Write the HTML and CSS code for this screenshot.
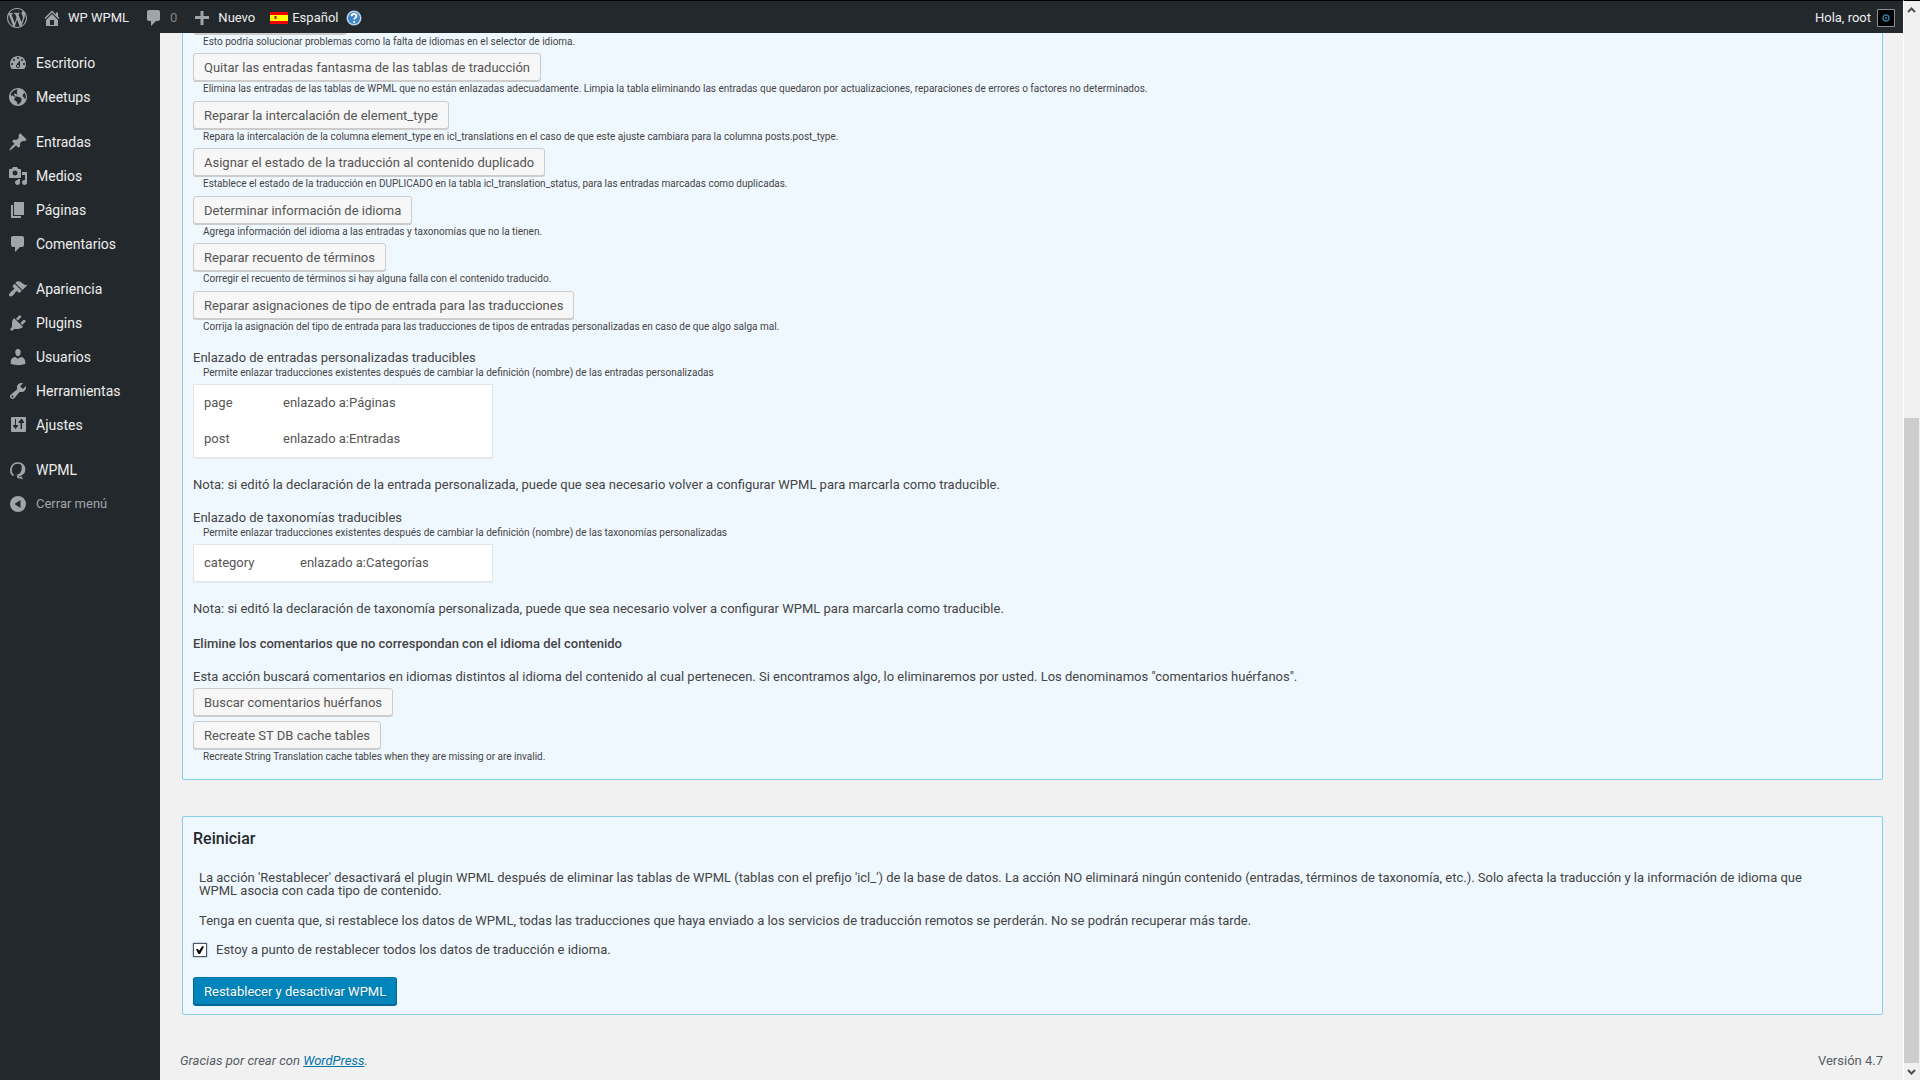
FILE: index.html
```html
<!DOCTYPE html>
<html lang="es">
<head>
<meta charset="utf-8">
<title>WP WPML</title>
<link rel="stylesheet" href="styles.css">
</head>
<body>
<div class="app">
<header class="bar">
  <a class="bar-item logo" href="#" aria-label="WordPress"><svg class="icon" viewBox="0 0 20 20"><path d="M20 10c0-5.51-4.49-10-10-10C4.48 0 0 4.49 0 10c0 5.52 4.48 10 10 10 5.51 0 10-4.48 10-10zM7.78 15.37L4.37 6.22c.55-.02 1.17-.08 1.17-.08.5-.06.44-1.13-.06-1.11 0 0-1.45.11-2.37.11-.18 0-.37 0-.58-.01C4.12 2.69 6.87 1.11 10 1.11c2.33 0 4.45.87 6.05 2.34-.68-.11-1.65.39-1.65 1.58 0 .74.45 1.36.9 2.1.35.61.55 1.36.55 2.46 0 1.49-1.4 5-1.4 5l-3.03-8.37c.54-.02.82-.17.82-.17.5-.05.44-1.25-.06-1.22 0 0-1.44.12-2.38.12-.87 0-2.33-.12-2.33-.12-.5-.03-.56 1.2-.06 1.22l.92.08 1.26 3.41zM17.41 10c.24-.64.74-1.87.43-4.25.7 1.29 1.05 2.71 1.05 4.25 0 3.29-1.73 6.24-4.4 7.78.97-2.59 1.94-5.2 2.92-7.78zM6.1 18.09C3.12 16.65 1.11 13.53 1.11 10c0-1.3.23-2.48.72-3.59C3.25 10.3 4.67 14.2 6.1 18.09zm4.03-6.63l2.58 6.98c-.86.29-1.76.45-2.71.45-.79 0-1.57-.11-2.29-.33.81-2.38 1.62-4.74 2.42-7.1z"/></svg></a>
  <a class="bar-item" href="#"><svg class="icon" viewBox="0 0 20 20"><path d="M16 8.5l1.53 1.53-1.06 1.06L10 4.6l-6.47 6.49-1.06-1.06L10 2.5l4 4v-2h2v4zm-6-2.46l6 5.99V18H4v-5.97zM12 17v-5H8v5h4z"/></svg>WP WPML</a>
  <a class="bar-item dim" href="#"><svg class="icon" viewBox="0 0 20 20"><path d="M5 2h9c1.1 0 2 .9 2 2v7c0 1.1-.9 2-2 2h-2l-5 5v-5H5c-1.1 0-2-.9-2-2V4c0-1.1.9-2 2-2z"/></svg>0</a>
  <a class="bar-item" href="#"><svg class="icon" viewBox="0 0 20 20"><path d="M17 8v3h-5.500v6h-3v-6H3V8h5.500V3h3v5z"/></svg>Nuevo</a>
  <a class="bar-item lang" href="#"><svg class="flag" viewBox="0 0 18 12"><path fill="#f00000" d="M0 0h18v12H0z"/><path fill="#ffff00" d="M0 3h18v6H0z"/><path fill="#e08020" d="M4 4h3v3H4z"/><path fill="#c02020" d="M5 4h1v3H5z"/></svg>Español</a>
  <a class="bar-item" href="#" aria-label="Ayuda"><svg class="help" viewBox="0 0 16 16"><circle cx="8" cy="8" r="7.500" fill="#b9d3ea"/><circle cx="8" cy="8" r="6" fill="#3d84c6"/><path d="M5.500 6.200C5.600 3.300 10.600 3.300 10.500 6c0 1.800-2.300 1.800-2.300 3.600M8.200 11v1.800" fill="none" stroke="#fff" stroke-width="1.900"/></svg></a>
  <a class="bar-item user" href="#">Hola, root<svg class="avatar" viewBox="0 0 18 18"><path fill="#000" stroke="#8c8f94" d="M.5.5h17v17H.5z"/><circle cx="9" cy="9" r="3" fill="none" stroke="#2d7896" stroke-width="1.500"/><circle cx="9" cy="9" r="1" fill="#3c8cc0"/></svg></a>
</header>
<div class="body">
<nav class="menu">
  <ul>
    <li><a href="#"><svg class="icon" viewBox="0 0 20 20"><path d="M3.760 16h12.480c1.100-1.370 1.760-3.110 1.760-5 0-4.420-3.580-8-8-8s-8 3.580-8 8c0 1.890.66 3.630 1.760 5zM10 4c.55 0 1 .45 1 1s-.45 1-1 1-1-.45-1-1 .45-1 1-1zM6 6c.55 0 1 .45 1 1s-.45 1-1 1-1-.45-1-1 .45-1 1-1zm8 0c.55 0 1 .45 1 1s-.45 1-1 1-1-.45-1-1 .45-1 1-1zm-5.370 5.550L12 7v6c0 1.100-.9 2-2 2s-2-.9-2-2c0-.57.24-1.080.63-1.450zM4 10c.55 0 1 .45 1 1s-.45 1-1 1-1-.45-1-1 .45-1 1-1zm12 0c.55 0 1 .45 1 1s-.45 1-1 1-1-.45-1-1 .45-1 1-1zm-5 3c0-.55-.45-1-1-1s-1 .45-1 1 .45 1 1 1 1-.45 1-1z"/></svg>Escritorio</a></li>
    <li><a href="#"><svg class="icon" viewBox="-1 -1 20 20"><path d="M9 0C4.030 0 0 4.030 0 9s4.030 9 9 9 9-4.030 9-9-4.030-9-9-9zm3.460 11.950c0 1.470-.8 3.300-4.060 4.700.3-4.170-2.520-3.690-3.200-5 .126-1.100.804-2.063 1.800-2.550-1.552-.266-3-.96-4.180-2 .05.47.28.904.64 1.210-.782-.295-1.458-.817-1.940-1.500.977-3.225 3.883-5.482 7.250-5.630-.84 1.380-1.500 4.130 0 5.570C7.230 7 6.260 5 5.410 5.790c-1.130 1.060.33 2.510 3.420 3.080 3.290.59 3.660 1.580 3.630 3.080zm1.340-4c-.32-1.110.62-2.230 1.690-3.140 1.356 1.955 1.670 4.450.84 6.680-.77-1.890-2.170-2.320-2.530-3.570z"/></svg>Meetups</a></li>
    <li class="group"><a href="#"><svg class="icon" viewBox="0 0 20 20"><path d="M10.440 3.020l1.820-1.820 6.360 6.350-1.830 1.820c-1.050-.68-2.480-.57-3.410.36l-.75.75c-.92.93-1.040 2.350-.35 3.410l-1.830 1.820-2.410-2.410-2.800 2.790c-.42.42-3.380 2.710-3.800 2.290s1.860-3.390 2.280-3.810l2.790-2.790L4.100 9.360l1.830-1.820c1.050.69 2.480.57 3.400-.36l.75-.75c.93-.92 1.050-2.350.36-3.410z"/></svg>Entradas</a></li>
    <li><a href="#"><svg class="icon" viewBox="0 0 20 20"><path d="M13 11V4c0-.55-.45-1-1-1h-1.670L9 1H5L3.670 3H2c-.55 0-1 .45-1 1v7c0 .55.45 1 1 1h10c.55 0 1-.45 1-1zM7 4.500c1.380 0 2.500 1.120 2.500 2.500S8.380 9.500 7 9.500 4.500 8.380 4.500 7 5.620 4.500 7 4.500zM14 6h5v10.500c0 1.380-1.120 2.500-2.500 2.500S14 17.880 14 16.500s1.120-2.500 2.500-2.500c.17 0 .34.02.5.05V9h-3V6zm-4 8.050V13h2v3.500c0 1.380-1.120 2.500-2.500 2.500S7 17.880 7 16.500 8.120 14 9.500 14c.17 0 .34.02.5.05z"/></svg>Medios</a></li>
    <li><a href="#"><svg class="icon" viewBox="0 0 20 20"><path d="M6 15V2h10v13H6zm-1 1h8v2H3V5h2v11z"/></svg>Páginas</a></li>
    <li><a href="#"><svg class="icon" viewBox="0 0 20 20"><path d="M5 2h9c1.100 0 2 .9 2 2v7c0 1.100-.9 2-2 2h-2l-5 5v-5H5c-1.100 0-2-.9-2-2V4c0-1.100.9-2 2-2z"/></svg>Comentarios</a></li>
    <li class="group"><a href="#"><svg class="icon" viewBox="0 0 20 20"><path d="M14.480 11.060L7.410 3.990l1.500-1.500c.5-.56 2.300-.47 3.510.32 1.210.8 1.430 1.280 2.910 2.100 1.180.64 2.450 1.260 4.450.85zm-.71.71L6.700 4.700 4.930 6.470c-.39.39-.39 1.020 0 1.410l1.060 1.060c.39.39.39 1.030 0 1.420-.6.6-1.430 1.110-2.210 1.690-.35.26-.7.53-1.010.84C1.430 14.230.4 16.080 1.400 17.070c.99 1 2.840-.03 4.180-1.360.31-.31.58-.66.85-1.020.57-.78 1.080-1.610 1.690-2.210.39-.39 1.020-.39 1.410 0l1.060 1.060c.39.39 1.020.39 1.410 0z"/></svg>Apariencia</a></li>
    <li><a href="#"><svg class="icon" viewBox="0 0 20 20"><path d="M13.110 4.360L9.870 7.600 8 5.730l3.240-3.240c.35-.34 1.050-.2 1.560.32.52.51.66 1.210.31 1.550zm-8 1.770l.91-1.120 9.010 9.010-1.190.84c-.71.71-2.630 1.160-3.820 1.160H6.140L4.900 17.260c-.59.59-1.540.59-2.120 0-.59-.58-.59-1.530 0-2.120l1.240-1.240v-3.880c0-1.130.4-3.190 1.090-3.890zm7.260 3.970l3.240-3.240c.34-.35 1.040-.21 1.550.31.52.51.66 1.210.31 1.550l-3.240 3.250z"/></svg>Plugins</a></li>
    <li><a href="#"><svg class="icon" viewBox="0 0 20 20"><path d="M10 9.250c-2.270 0-2.730-3.440-2.730-3.440C7 4.020 7.820 2 9.970 2c2.160 0 2.980 2.020 2.710 3.810 0 0-.41 3.440-2.680 3.440zm0 2.570L12.720 10c2.390 0 4.520 2.330 4.520 4.530v2.490s-3.650 1.130-7.240 1.130c-3.650 0-7.240-1.130-7.240-1.130v-2.490c0-2.250 1.940-4.480 4.470-4.480z"/></svg>Usuarios</a></li>
    <li><a href="#"><svg class="icon" viewBox="0 0 20 20"><path d="M16.680 9.770c-1.340 1.340-3.300 1.670-4.950.99l-5.410 6.520c-.99.99-2.590.99-3.580 0s-.99-2.590 0-3.570l6.520-5.420c-.68-1.650-.35-3.610.99-4.950 1.280-1.280 3.120-1.620 4.720-1.060l-2.890 2.890 2.820 2.820 2.860-2.870c.53 1.580.18 3.390-1.080 4.650zM3.810 16.210c.4.39 1.040.39 1.430 0 .4-.4.4-1.040 0-1.430-.39-.4-1.030-.4-1.430 0-.39.39-.39 1.030 0 1.430z"/></svg>Herramientas</a></li>
    <li><a href="#"><svg class="icon" viewBox="0 0 20 20"><path fill-rule="evenodd" d="M4 2h13q1 0 1 1v13q0 1-1 1H4q-1 0-1-1V3q0-1 1-1zM7 4v6H5v1l2.500 3L10 11v-1H8V4zM13 4l-2.500 3v1h2v6h1.500V8h2V7L14 4z"/></svg>Ajustes</a></li>
    <li class="group"><a href="#"><svg class="icon" viewBox="0 0 20 20"><path d="M5.500 15.500C1 12 2.500 3 10 3c4 0 6.500 3 6.500 6.500 0 4-3.500 5.500-5.500 6-2 .8-1 2.500 1 2 1.500-.5 2 .5 1.500 1.500" fill="none" stroke="currentColor" stroke-width="1.700"/><path d="M13 3.500c4 2 5 7 2 10-3 2.500-7 2-7 1.500 5-1 7-5 5-11.500z"/></svg>WPML</a></li>
    <li><button class="collapse" type="button"><svg class="icon" viewBox="0 0 20 20"><path fill-rule="evenodd" d="M10 2a8 8 0 1 1 0 16 8 8 0 0 1 0-16zm2.500 4L6.500 10l6 4z"/></svg>Cerrar menú</button></li>
  </ul>
</nav>
<main class="main">
  <section class="panel first">
    <div class="tool clipped"><button class="btn" type="button" aria-label="Idiomas"></button><p class="hint">Esto podría solucionar problemas como la falta de idiomas en el selector de idioma.</p></div>
    <div class="tool"><button class="btn" type="button">Quitar las entradas fantasma de las tablas de traducción</button><p class="hint">Elimina las entradas de las tablas de WPML que no están enlazadas adecuadamente. Limpia la tabla eliminando las entradas que quedaron por actualizaciones, reparaciones de errores o factores no determinados.</p></div>
    <div class="tool"><button class="btn" type="button">Reparar la intercalación de element_type</button><p class="hint">Repara la intercalación de la columna element_type en icl_translations en el caso de que este ajuste cambiara para la columna posts.post_type.</p></div>
    <div class="tool"><button class="btn" type="button">Asignar el estado de la traducción al contenido duplicado</button><p class="hint">Establece el estado de la traducción en DUPLICADO en la tabla icl_translation_status, para las entradas marcadas como duplicadas.</p></div>
    <div class="tool"><button class="btn" type="button">Determinar información de idioma</button><p class="hint">Agrega información del idioma a las entradas y taxonomías que no la tienen.</p></div>
    <div class="tool"><button class="btn" type="button">Reparar recuento de términos</button><p class="hint">Corregir el recuento de términos si hay alguna falla con el contenido traducido.</p></div>
    <div class="tool"><button class="btn" type="button">Reparar asignaciones de tipo de entrada para las traducciones</button><p class="hint">Corrija la asignación del tipo de entrada para las traducciones de tipos de entradas personalizadas en caso de que algo salga mal.</p></div>

    <div class="link-block">
      <p class="text">Enlazado de entradas personalizadas traducibles</p>
      <p class="hint">Permite enlazar traducciones existentes después de cambiar la definición (nombre) de las entradas personalizadas</p>
      <table class="links">
        <tr><td class="key">page</td><td>enlazado a:Páginas</td></tr>
        <tr><td class="key">post</td><td>enlazado a:Entradas</td></tr>
      </table>
      <p class="text">Nota: si editó la declaración de la entrada personalizada, puede que sea necesario volver a configurar WPML para marcarla como traducible.</p>
    </div>
    <div class="link-block">
      <p class="text">Enlazado de taxonomías traducibles</p>
      <p class="hint">Permite enlazar traducciones existentes después de cambiar la definición (nombre) de las taxonomías personalizadas</p>
      <table class="links">
        <tr><td class="key wide">category</td><td>enlazado a:Categorías</td></tr>
      </table>
      <p class="text">Nota: si editó la declaración de taxonomía personalizada, puede que sea necesario volver a configurar WPML para marcarla como traducible.</p>
    </div>
    <h4 class="subtitle">Elimine los comentarios que no correspondan con el idioma del contenido</h4>
    <p class="text">Esta acción buscará comentarios en idiomas distintos al idioma del contenido al cual pertenecen. Si encontramos algo, lo eliminaremos por usted. Los denominamos "comentarios huérfanos".</p>
    <div class="orphans"><button class="btn" type="button">Buscar comentarios huérfanos</button></div>
    <div class="cache"><button class="btn" type="button">Recreate ST DB cache tables</button><p class="hint">Recreate String Translation cache tables when they are missing or are invalid.</p></div>
  </section>

  <section class="panel reset">
    <h3 class="title">Reiniciar</h3>
    <p class="warn">La acción 'Restablecer' desactivará el plugin WPML después de eliminar las tablas de WPML (tablas con el prefijo 'icl_') de la base de datos. La acción NO eliminará ningún contenido (entradas, términos de taxonomía, etc.). Solo afecta la traducción y la información de idioma que WPML asocia con cada tipo de contenido.</p>
    <p class="warn">Tenga en cuenta que, si restablece los datos de WPML, todas las traducciones que haya enviado a los servicios de traducción remotos se perderán. No se podrán recuperar más tarde.</p>
    <label class="confirm"><input class="check" type="checkbox" checked>Estoy a punto de restablecer todos los datos de traducción e idioma.</label>
    <button class="btn primary" type="button">Restablecer y desactivar WPML</button>
  </section>

  <footer class="footer"><p class="thanks">Gracias por crear con <a href="#">WordPress</a>.</p><p>Versión 4.7</p></footer>
</main>
</div>
</div>
<div class="scroll" aria-hidden="true">
  <svg class="arrow" viewBox="0 0 15 17"><path d="M4 11l3.500-3.500L11 11" /></svg>
  <div class="space"></div>
  <div class="thumb"></div>
  <svg class="arrow" viewBox="0 0 15 17"><path d="M4 7l3.500 3.500L11 7"/></svg>
</div>
</body>
</html>
```
FILE: styles.css
```css
* { box-sizing: border-box; }
body {
  margin: 0;
  display: flex;
  min-height: 100vh;
  background: #f1f1f1;
  color: #444;
  font: 13px/18px Roboto, "Open Sans", sans-serif;
}
p, h3, h4, ul { margin: 0; padding: 0; }
button { font: inherit; }
.app { flex: 1; min-width: 0; display: flex; flex-direction: column; }

/* Admin bar */
.bar {
  display: flex;
  align-items: center;
  height: 33px;
  padding: 2px 8px 0 7px;
  border-top: 1px solid #000;
  background: #23282d;
}
.bar-item {
  display: flex;
  align-items: center;
  gap: 6px;
  margin-right: 15px;
  color: #eee;
  text-decoration: none;
}
.icon { flex: none; width: 20px; height: 20px; fill: currentColor; color: #a0a5aa; }
.dim { color: #84878b; }
.lang { gap: 4px; margin-right: 8px; }
.flag { width: 18px; height: 12px; }
.help { width: 16px; height: 16px; }
.user { margin-left: auto; margin-right: 0; }
.avatar { width: 18px; height: 18px; }

.body { flex: 1; display: flex; min-height: 0; }

/* Side menu */
.menu { width: 160px; padding-top: 13px; background: #23282d; }
.menu ul { list-style: none; }
.menu a, .collapse {
  display: flex;
  align-items: center;
  gap: 8px;
  width: 100%;
  height: 34px;
  padding: 0 8px;
  color: #eee;
  font-size: 14px;
  text-decoration: none;
}
.menu .group { margin-top: 11px; }
.menu .collapse { border: 0; background: none; color: #a0a5aa; font-size: 13px; }

/* Content */
.main { flex: 1; min-width: 0; padding: 0 20px 0 22px; overflow: hidden; }
.panel { border: 1px solid #87ceeb; border-radius: 2px; background: #f0f8ff; padding: 0 10px; }
.first { margin-top: -28px; padding-bottom: 13px; }
.tool { height: 48px; }
.tool:nth-child(odd) { height: 47px; }
.clipped .btn { width: 154px; }
.btn {
  display: block;
  height: 28px;
  padding: 1px 10px 0;
  border: 1px solid #ccc;
  border-radius: 3px;
  background: #f7f7f7;
  box-shadow: 0 1px 0 #ccc;
  color: #555;
}
.hint { padding-left: 10px; font-size: 10px; line-height: 16px; }
.link-block { margin: 11px 0 15px; }
.link-block + .link-block { margin: 0 0 17px; }
.link-block .hint { line-height: 12px; }
.links {
  width: 300px;
  margin: 5px 0 18px;
  border: 1px solid #e5e5e5;
  border-spacing: 0;
  background: #fff;
  box-shadow: 0 1px 1px rgba(0, 0, 0, 0.04);
  color: #555;
}
.links td { height: 36px; padding: 0 0 0 10px; }
.key { width: 79px; }
.wide { width: 96px; }
.subtitle { margin-bottom: 15px; font-size: 13px; font-weight: 500; }
.orphans { margin: 2px 0 5px; }
.cache { padding-bottom: 1px; }
.reset { margin-top: 36px; padding-bottom: 9px; }
.title { margin: 13px 0 23px; color: #23282d; font-size: 16px; line-height: 18px; font-weight: 500; }
.warn { margin: 0 46px 17px 6px; line-height: 13px; }
.confirm { display: flex; align-items: center; gap: 9px; margin: -3px 0 18px; }
.check {
  appearance: none;
  display: grid;
  place-items: center;
  width: 14px;
  height: 14px;
  margin: 0;
  border: 1px solid #555;
  background: #fff;
  box-shadow: 0 0 2px #5b9dd9;
}
.check:checked::before {
  content: "";
  width: 8px;
  height: 8px;
  background: #000;
  clip-path: polygon(0 45%, 20% 35%, 38% 60%, 80% 0, 100% 10%, 50% 100%, 30% 100%);
}
.primary { border-color: #0073aa #006799 #006799; background: #0085ba; box-shadow: 0 1px 0 #006799; color: #fff; text-shadow: 0 1px 1px #006799; }
.footer { display: flex; justify-content: space-between; margin: 37px 0 9px -2px; color: #555d66; }
.thanks { font-style: italic; }
.footer a { color: #0073aa; }

/* Scroll track */
.scroll { display: flex; flex-direction: column; width: 17px; border-left: 1px solid #fff; border-top: 1px solid #000; background: #f0f0f0; }
.arrow { width: 15px; height: 17px; fill: none; stroke: #505050; stroke-width: 2; }
.space { flex: 400; }
.thumb { flex: 645; width: 15px; background: #cdcdcd; }
```
